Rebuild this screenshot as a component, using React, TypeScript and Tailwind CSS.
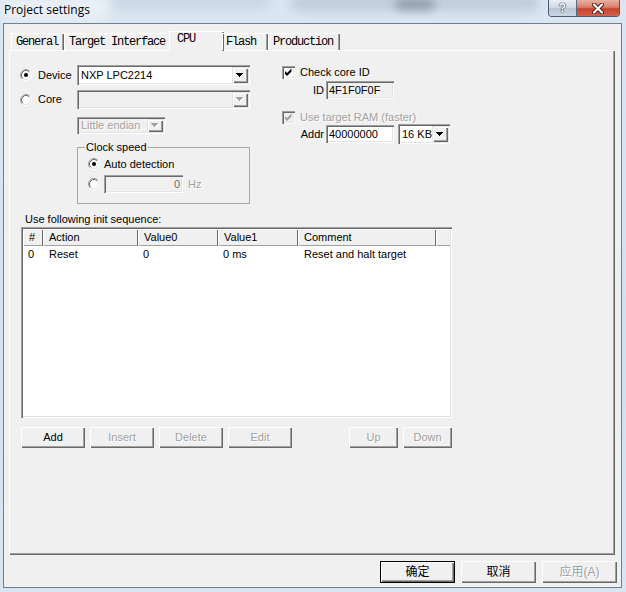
import React from "react";

const RAISED =
  "shadow-[inset_1px_1px_0_#ffffff,inset_-1px_-1px_0_#696969,inset_-2px_-2px_0_#a0a0a0]";
const DEFBTN =
  "shadow-[inset_0_0_0_1px_#000000,inset_2px_2px_0_#ffffff,inset_-2px_-2px_0_#696969,inset_-3px_-3px_0_#a0a0a0]";
const SMALLBTN =
  "shadow-[inset_1px_1px_0_#e3e3e3,inset_2px_2px_0_#ffffff,inset_-1px_-1px_0_#696969,inset_-2px_-2px_0_#a0a0a0]";
const SUNKEN =
  "shadow-[inset_1px_1px_0_#a0a0a0,inset_2px_2px_0_#696969,inset_-1px_-1px_0_#ffffff,inset_-2px_-2px_0_#e3e3e3]";
const PANEL =
  "shadow-[inset_1px_1px_0_#ffffff,inset_-1px_-1px_0_#696969,inset_-2px_-2px_0_#a0a0a0]";
const DIS = "text-[#a0a0a0] [text-shadow:1px_1px_0_#ffffff]";

function Arrow({ disabled }: { disabled?: boolean }) {
  const d = "M0 0h7v1h-1v1h-1v1h-1v1h-1v-1h-1v-1h-1v-1h-1z";
  return (
    <svg width="8" height="5" viewBox="0 0 8 5" shapeRendering="crispEdges">
      {disabled && <path d={d} transform="translate(1 1)" fill="#ffffff" />}
      <path d={d} fill={disabled ? "#a0a0a0" : "#000000"} />
    </svg>
  );
}

function Radio({ checked }: { checked?: boolean }) {
  return (
    <svg width="12" height="12" viewBox="0 0 12 12" className="shrink-0">
      <circle cx="6" cy="6" r="4.5" fill="#ffffff" />
      <path d="M2.11 9.89A5.5 5.5 0 0 1 9.89 2.11" fill="none" stroke="#a0a0a0" />
      <path d="M9.89 2.11A5.5 5.5 0 0 1 2.11 9.89" fill="none" stroke="#ffffff" />
      <path d="M2.82 9.18A4.5 4.5 0 0 1 9.18 2.82" fill="none" stroke="#696969" />
      <path d="M9.18 2.82A4.5 4.5 0 0 1 2.82 9.18" fill="none" stroke="#e3e3e3" />
      {checked && <circle cx="6" cy="6" r="2" fill="#000000" />}
    </svg>
  );
}

function Check({ disabled }: { disabled?: boolean }) {
  return (
    <span
      className={`flex h-[13px] w-[13px] shrink-0 items-center justify-center ${
        disabled ? "bg-[#f0f0f0]" : "bg-white"
      } ${SUNKEN}`}
    >
      <svg width="13" height="13" viewBox="0 0 13 13">
        <path d="M3 5L5 7L9.5 2.5V5.5L5 10L3 8Z" fill={disabled ? "#a0a0a0" : "#000000"} />
      </svg>
    </span>
  );
}

function Combo({ cls, text, disabled }: { cls: string; text: string; disabled?: boolean }) {
  return (
    <div
      className={`flex shrink-0 p-[2px] ${SUNKEN} ${disabled ? "bg-[#f0f0f0]" : "bg-white"} ${cls}`}
    >
      <div
        className={`flex flex-1 items-center overflow-hidden whitespace-nowrap pl-[2px] leading-[13px] ${
          disabled ? DIS : ""
        }`}
      >
        {text}
      </div>
      <div
        className={`flex w-[16px] shrink-0 items-center justify-center bg-[#f0f0f0] ${SMALLBTN}`}
      >
        <Arrow disabled={disabled} />
      </div>
    </div>
  );
}

function TextBox({
  cls,
  text,
  bg,
  right,
  disabled,
}: {
  cls: string;
  text: string;
  bg: string;
  right?: boolean;
  disabled?: boolean;
}) {
  return (
    <div className={`flex shrink-0 items-center p-[2px] ${SUNKEN} ${bg} ${cls}`}>
      <div
        className={`flex-1 whitespace-nowrap leading-[13px] ${right ? "pr-[1px] text-right" : "pl-[1px]"} ${
          disabled ? "text-[#6d6d6d]" : ""
        }`}
      >
        {text}
      </div>
    </div>
  );
}

function Btn({ label, cls, disabled }: { label: string; cls: string; disabled?: boolean }) {
  return (
    <div
      className={`flex h-[21px] shrink-0 items-center justify-center bg-[#f0f0f0] leading-[13px] ${RAISED} ${
        disabled ? DIS : ""
      } ${cls}`}
    >
      {label}
    </div>
  );
}

function Tab({ label, cls }: { label: string; cls: string }) {
  return (
    <div
      className={`h-[17px] shrink-0 pt-[2px] leading-[14px] shadow-[inset_1px_1px_0_#ffffff,inset_-1px_0_0_#696969,inset_-2px_0_0_#a0a0a0] ${cls}`}
    >
      {label}
    </div>
  );
}

export default function App() {
  return (
    <div className="relative h-[592px] w-[626px] overflow-hidden bg-[linear-gradient(180deg,#dbe6f2_0%,#d3e0ee_60%,#d9e5f1_100%)] font-['Liberation_Sans',Arial,sans-serif] text-[11px] text-black">
      {/* Title bar */}
      <div className="relative flex h-[23px] items-start overflow-hidden">
        <div className="absolute left-[110px] top-[-4px] h-[12px] w-[160px] rounded-full bg-[#b9c5d2] opacity-60 blur-[6px]" />
        <div className="absolute left-[290px] top-[-4px] h-[14px] w-[250px] rounded-full bg-[#a7b3c1] opacity-60 blur-[6px]" />
        <div className="absolute left-[395px] top-[-2px] h-[12px] w-[40px] rounded-full bg-[#6f7d8d] opacity-60 blur-[5px]" />
        <div className="absolute left-[0px] top-[-2px] h-[22px] w-[110px] rounded-full bg-[#eef3f8] opacity-80 blur-[6px]" />
        <div className="relative pl-[4px] pt-[2px] font-['Open_Sans','Liberation_Sans',sans-serif] text-[12px] leading-[16px] text-black">
          Project settings
        </div>
        <div className="relative ml-auto mr-[6px] flex h-[17px] overflow-hidden rounded-b-[4px] border border-t-0 border-[#4b5a6e]">
          <div className="flex w-[28px] items-center justify-center border-r border-[#5d6b7e] bg-[linear-gradient(180deg,#e9eef4_0%,#cdd7e3_50%,#b6c4d4_51%,#c9d6e4_100%)]">
            <span className="font-['Liberation_Sans',Arial,sans-serif] text-[12px] font-bold leading-[12px] text-white [text-shadow:0_0_1px_#2b3a4d,0_0_1px_#2b3a4d,0_0_1px_#2b3a4d]">
              ?
            </span>
          </div>
          <div className="flex w-[42px] items-center justify-center bg-[linear-gradient(180deg,#eab0a2_0%,#d9816c_45%,#c7432b_55%,#d2624a_100%)]">
            <svg width="12" height="11" viewBox="0 0 12 11">
              <path d="M2 1.5L10 9.5M10 1.5L2 9.5" stroke="#4a1a10" strokeWidth="4" strokeLinecap="round" />
              <path d="M2 1.5L10 9.5M10 1.5L2 9.5" stroke="#ffffff" strokeWidth="2.2" strokeLinecap="round" />
            </svg>
          </div>
        </div>
      </div>

      {/* Client area */}
      <div className="ml-[3px] flex h-[565px] w-[619px] flex-col border border-[#6c7f96] bg-[#f0f0f0] pl-[5px]">
        {/* Tabs */}
        <div className="relative z-10 mt-[7px] flex h-[19px] items-end pl-[2px] font-['Liberation_Mono','DejaVu_Sans_Mono',monospace] text-[12px] tracking-[-1.2px]">
          <Tab label="General" cls="w-[53px] pl-[5px]" />
          <Tab label="Target Interface" cls="w-[107px] pl-[5px]" />
          <div className="-mx-[2px] -mb-[1px] h-[20px] w-[55px] shrink-0 bg-[#f0f0f0] pl-[8px] pt-[1px] leading-[14px] shadow-[inset_1px_1px_0_#ffffff,inset_-1px_0_0_#696969,inset_-2px_0_0_#a0a0a0]">
            CPU
          </div>
          <Tab label="Flash" cls="w-[46px] pl-[4px]" />
          <Tab label="Production" cls="w-[72px] pl-[5px]" />
        </div>

        {/* Panel */}
        <div className={`flex h-[505px] w-[606px] shrink-0 flex-col pl-[12px] pt-[15px] ${PANEL}`}>
          <div className="flex">
            {/* Left column */}
            <div className="flex w-[261px] flex-col">
              <div className="flex h-[20px] items-center">
                <span className="-ml-[1px] flex w-[18px]">
                  <Radio checked />
                </span>
                <span className="w-[39px] leading-[13px]">Device</span>
                <Combo cls="h-[20px] w-[173px]" text="NXP LPC2214" />
              </div>
              <div className="mt-[5px] flex h-[19px] items-center">
                <span className="-ml-[1px] flex w-[18px]">
                  <Radio />
                </span>
                <span className="w-[39px] leading-[13px]">Core</span>
                <Combo cls="h-[19px] w-[173px]" text="" disabled />
              </div>
              <div className="ml-[56px] mt-[8px] flex">
                <Combo cls="h-[17px] w-[88px]" text="Little endian" disabled />
              </div>
              <fieldset className="ml-[56px] mt-[7px] h-[63px] w-[173px] border border-[#a8a8a8] p-0">
                <legend className="ml-[7px] px-[1px] leading-[13px]">Clock speed</legend>
                <div className="mt-[2px] flex h-[16px] items-center pl-[10px]">
                  <Radio checked />
                  <span className="ml-[4px] leading-[13px]">Auto detection</span>
                </div>
                <div className="mt-[3px] flex h-[18px] items-center pl-[10px]">
                  <Radio />
                  <TextBox cls="ml-[4px] h-[18px] w-[79px]" text="0" bg="bg-[#f0f0f0]" right disabled />
                  <span className={`ml-[5px] leading-[13px] ${DIS}`}>Hz</span>
                </div>
              </fieldset>
            </div>

            {/* Right column */}
            <div className="flex flex-col">
              <div className="mt-[1px] flex h-[13px] items-center">
                <Check />
                <span className="ml-[5px] leading-[13px]">Check core ID</span>
              </div>
              <div className="mt-[2px] flex h-[18px] items-center">
                <span className="w-[44px] pr-[2px] text-right leading-[13px]">ID</span>
                <TextBox cls="h-[18px] w-[68px]" text="4F1F0F0F" bg="bg-[#f0f0f0]" />
              </div>
              <div className="mt-[12px] flex h-[13px] items-center">
                <Check disabled />
                <span className={`ml-[5px] leading-[13px] ${DIS}`}>Use target RAM (faster)</span>
              </div>
              <div className="flex h-[20px] items-center">
                <span className="w-[44px] pr-[2px] text-right leading-[13px]">Addr</span>
                <TextBox cls="h-[18px] w-[68px]" text="40000000" bg="bg-white" />
                <Combo cls="ml-[4px] h-[20px] w-[52px]" text="16 KB" />
              </div>
            </div>
          </div>

          <div className="ml-[4px] mt-[9px] h-[13px] leading-[13px]">Use following init sequence:</div>

          {/* List view */}
          <div className={`mt-[1px] flex h-[191px] w-[431px] shrink-0 flex-col bg-white p-[2px] ${SUNKEN}`}>
            <div className="flex h-[17px] shrink-0 bg-[#f0f0f0] leading-[13px]">
              {[
                ["#", "w-[20px]"],
                ["Action", "w-[95px]"],
                ["Value0", "w-[80px]"],
                ["Value1", "w-[80px]"],
                ["Comment", "w-[138px]"],
              ].map(([t, w]) => (
                <div
                  key={t}
                  className={`flex shrink-0 items-center pl-[6px] shadow-[inset_1px_1px_0_#ffffff,inset_-1px_0_0_#696969,inset_0_-1px_0_#a0a0a0] ${w}`}
                >
                  {t}
                </div>
              ))}
              <div className="flex-1 shadow-[inset_1px_1px_0_#ffffff,inset_0_-1px_0_#a0a0a0]" />
            </div>
            <div className="mt-[1px] flex h-[15px] items-center leading-[13px]">
              <div className="w-[20px] shrink-0 pl-[5px]">0</div>
              <div className="w-[95px] shrink-0 pl-[6px]">Reset</div>
              <div className="w-[80px] shrink-0 pl-[5px]">0</div>
              <div className="w-[80px] shrink-0 pl-[5px]">0 ms</div>
              <div className="w-[138px] shrink-0 pl-[6px]">Reset and halt target</div>
            </div>
          </div>

          {/* List buttons */}
          <div className="mt-[9px] flex h-[21px] w-[431px]">
            <Btn label="Add" cls="w-[64px]" />
            <Btn label="Insert" cls="ml-[5px] w-[64px]" disabled />
            <Btn label="Delete" cls="ml-[5px] w-[64px]" disabled />
            <Btn label="Edit" cls="ml-[5px] w-[64px]" disabled />
            <Btn label="Up" cls="ml-auto w-[49px]" disabled />
            <Btn label="Down" cls="ml-[5px] w-[49px]" disabled />
          </div>
        </div>

        {/* Dialog buttons */}
        <div className="mt-[6px] flex justify-end gap-[6px] pr-[4px] font-['Liberation_Sans','Noto_Sans_CJK_SC',sans-serif] text-[12px]">
          <div className={`flex h-[22px] w-[75px] items-center justify-center bg-[#f0f0f0] ${DEFBTN}`}>确定</div>
          <div className={`flex h-[22px] w-[75px] items-center justify-center bg-[#f0f0f0] ${RAISED}`}>取消</div>
          <div className={`flex h-[22px] w-[75px] items-center justify-center bg-[#f0f0f0] ${RAISED} ${DIS}`}>
            应用(A)
          </div>
        </div>
      </div>
    </div>
  );
}
